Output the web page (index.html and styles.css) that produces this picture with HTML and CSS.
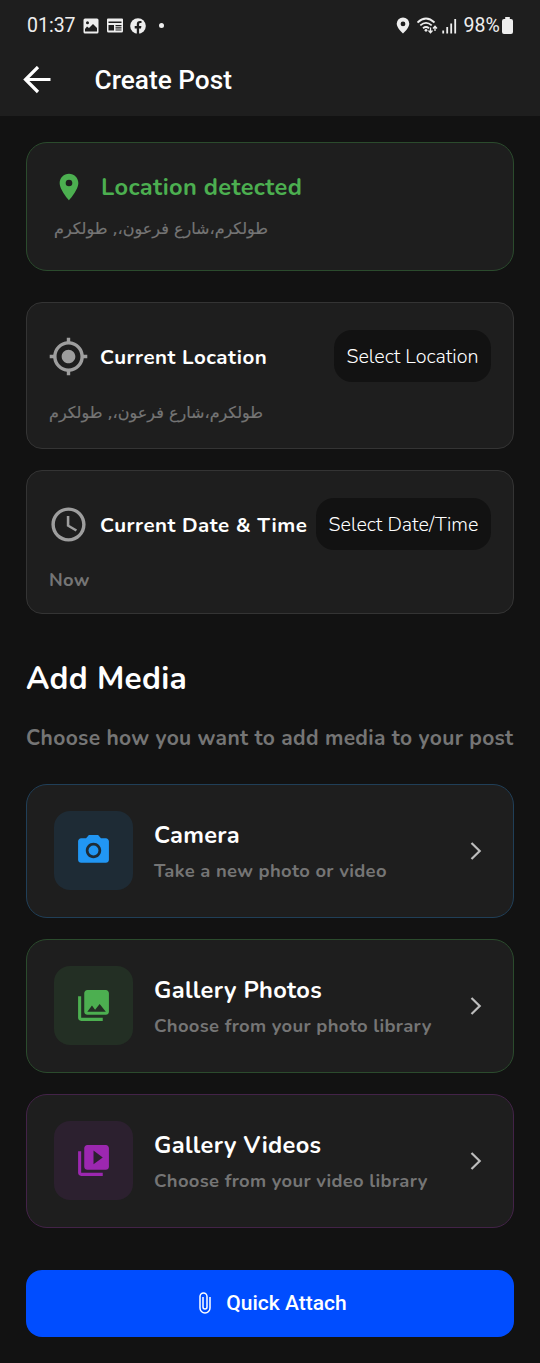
FILE: index.html
```html
<!DOCTYPE html>
<html lang="en">
<head>
<meta charset="utf-8">
<title>Create Post</title>
<link rel="stylesheet" href="styles.css">
</head>
<body>
<header class="top">
  <div class="status">
    <span class="clock">01:37</span>
    <svg class="s-photo" width="16" height="16" viewBox="0 0 16 16"><path fill="#eee" fill-rule="evenodd" d="M2 .5h12A1.5 1.5 0 0 1 15.500 2v12a1.500 1.500 0 0 1-1.500 1.500H2A1.500 1.500 0 0 1 .5 14V2A1.500 1.500 0 0 1 2 .5zM2 11v2.500h12V10l-4-4-4 4-2-1.500zM4.500 3.200a1.500 1.500 0 1 0 0 3 1.500 1.500 0 0 0 0-3z"/></svg>
    <svg class="s-news" width="16" height="15" viewBox="0 0 16 15"><path fill="#eee" fill-rule="evenodd" d="M1 .5h14a1 1 0 0 1 1 1V13a1.500 1.500 0 0 1-1.500 1.500h-13A1.500 1.500 0 0 1 0 13V1.500a1 1 0 0 1 1-1zM1.500 3.500V5h13V3.500zM1.500 7v5.500H7V7zM8.500 7v1.200h6V7zm0 2.300v1.100h6V9.300zm0 2.200v1h6v-1z"/></svg>
    <svg class="s-fb" width="16" height="16" viewBox="0 0 16 16"><circle cx="8" cy="8" r="7.800" fill="#eee"/><path fill="#1e1e1e" d="M6.800 16v-5.500H4.700V8h2.100V6.300c0-2.200 1.200-3.300 3.200-3.300.8 0 1.500.1 1.500.1v2h-1c-1.100 0-1.400.6-1.400 1.300V8h2.300l-.4 2.500H9.100V16z"/></svg>
    <i class="dot"></i>
    <span class="grow"></span>
    <svg width="14" height="17" viewBox="0 0 14 17"><path fill="#eee" fill-rule="evenodd" d="M7 .5A6.300 6.300 0 0 0 .7 6.800C.7 11 7 16.500 7 16.500s6.300-5.500 6.300-9.700A6.300 6.300 0 0 0 7 .5zm0 4a2.400 2.400 0 1 1 0 4.800 2.400 2.400 0 0 1 0-4.800z"/></svg>
    <svg class="s-wifi" width="22" height="17" viewBox="0 0 22 17"><g fill="none" stroke="#eee" stroke-width="1.800"><path d="M.5 5.500Q9-2.500 17.500 5.500M3.300 8.400q5.700-5 11.400 0M6 11.200q3-2.500 6 0"/></g><circle cx="9" cy="13.300" r="1.400" fill="#eee"/><path fill="none" stroke="#eee" stroke-width="1.300" d="M13.500 10.500v5m-2-2 2 2.200 2-2.200M18 14v-4.500m-2 2 2-2.200 2 2.200"/></svg>
    <svg class="s-signal" width="15" height="16" viewBox="0 0 15 16"><path stroke="#eee" stroke-width="1.800" d="M1.200 15.500v-3M5.200 15.500V9M9.200 15.500V5.500M13.200 15.500V1"/></svg>
    <span class="battery-text">98%</span>
    <svg class="s-bat" width="11" height="17" viewBox="0 0 11 17"><path fill="#eee" d="M3.200 0h4.600v2h1.200a2 2 0 0 1 2 2v11a2 2 0 0 1-2 2H2a2 2 0 0 1-2-2V4a2 2 0 0 1 2-2h1.200z"/></svg>
  </div>
  <div class="bar">
    <svg width="28" height="28" viewBox="0 0 28 28"><path fill="none" stroke="#fff" stroke-width="3.200" d="M27.500 13.500H2.500M15 1 2.500 13.500 15 26"/></svg>
    <h1>Create Post</h1>
  </div>
</header>
<main>
  <section class="card detected">
    <div class="row">
      <svg width="32" height="32" viewBox="0 0 24 24"><path fill="#4caf50" d="M12 2C8.130 2 5 5.130 5 9c0 5.250 7 13 7 13s7-7.750 7-13c0-3.870-3.130-7-7-7zm0 9.500a2.500 2.500 0 0 1 0-5 2.500 2.500 0 0 1 0 5z"/></svg>
      <h2>Location detected</h2>
    </div>
    <p class="arabic" lang="ar"><bdo dir="rtl">طولكرم،شارع فرعون،, طولكرم</bdo></p>
  </section>

  <section class="card setting">
    <div class="row">
      <svg width="41" height="41" viewBox="0 0 24 24"><path fill="#9e9e9e" d="M12 8c-2.210 0-4 1.790-4 4s1.790 4 4 4 4-1.790 4-4-1.790-4-4-4zm8.940 3A8.994 8.994 0 0 0 13 3.060V1h-2v2.060A8.994 8.994 0 0 0 3.060 11H1v2h2.060A8.994 8.994 0 0 0 11 20.940V23h2v-2.060A8.994 8.994 0 0 0 20.940 13H23v-2h-2.060zM12 19c-3.870 0-7-3.130-7-7s3.130-7 7-7 7 3.130 7 7-3.130 7-7 7z"/></svg>
      <h3>Current Location</h3>
      <button class="pill p-loc">Select Location</button>
    </div>
    <p class="arabic" lang="ar"><bdo dir="rtl">طولكرم،شارع فرعون،, طولكرم</bdo></p>
  </section>

  <section class="card setting time">
    <div class="row">
      <svg width="41" height="41" viewBox="0 0 24 24"><path fill="#9e9e9e" d="M11.990 2C6.470 2 2 6.480 2 12s4.470 10 9.990 10C17.520 22 22 17.520 22 12S17.520 2 11.990 2zM12 20c-4.420 0-8-3.580-8-8s3.580-8 8-8 8 3.580 8 8-3.580 8-8 8zm.5-13H11v6l5.250 3.150.75-1.230-4.500-2.670z"/></svg>
      <h3>Current Date &amp; Time</h3>
      <button class="pill p-date">Select Date/Time</button>
    </div>
    <p class="now">Now</p>
  </section>

  <h2 class="media-title">Add Media</h2>
  <p class="media-sub">Choose how you want to add media to your post</p>

  <div class="options">
    <section class="card option blue">
      <div class="tile"><svg width="37" height="37" viewBox="0 0 24 24"><circle cx="12" cy="12" r="3.200"/><path d="M9 2 7.170 4H4c-1.100 0-2 .9-2 2v12c0 1.100.9 2 2 2h16c1.100 0 2-.9 2-2V6c0-1.100-.9-2-2-2h-3.170L15 2H9zm3 15c-2.760 0-5-2.240-5-5s2.240-5 5-5 5 2.240 5 5-2.240 5-5 5z"/></svg></div>
      <div class="text"><h3>Camera</h3><p>Take a new photo or video</p></div>
      <svg class="chev" width="12" height="18" viewBox="0 0 12 18"><path d="M1.500 1 9.700 9 1.500 17"/></svg>
    </section>
    <section class="card option green">
      <div class="tile"><svg width="37" height="37" viewBox="0 0 24 24"><path d="M22 16V4c0-1.100-.9-2-2-2H8c-1.100 0-2 .9-2 2v12c0 1.100.9 2 2 2h12c1.100 0 2-.9 2-2zm-11-4 2.030 2.710L16 11l4 5H8l3-4zM2 6v14c0 1.100.9 2 2 2h14v-2H4V6H2z"/></svg></div>
      <div class="text"><h3>Gallery Photos</h3><p>Choose from your photo library</p></div>
      <svg class="chev" width="12" height="18" viewBox="0 0 12 18"><path d="M1.500 1 9.700 9 1.500 17"/></svg>
    </section>
    <section class="card option purple">
      <div class="tile"><svg width="37" height="37" viewBox="0 0 24 24"><path d="M4 6H2v14c0 1.100.9 2 2 2h14v-2H4V6zm16-4H8c-1.100 0-2 .9-2 2v12c0 1.100.9 2 2 2h12c1.100 0 2-.9 2-2V4c0-1.100-.9-2-2-2zm-8 12.500v-9l6 4.500-6 4.500z"/></svg></div>
      <div class="text"><h3>Gallery Videos</h3><p>Choose from your video library</p></div>
      <svg class="chev" width="12" height="18" viewBox="0 0 12 18"><path d="M1.500 1 9.700 9 1.500 17"/></svg>
    </section>
  </div>

  <button class="attach">
    <svg width="12" height="22" viewBox="0 0 12 22"><path fill="none" stroke="#fff" stroke-width="1.500" d="M11 5v11a5 5 0 0 1-10 0V4.500a3.500 3.500 0 0 1 7 0V15a2 2 0 0 1-4 0V5"/></svg>
    <span>Quick Attach</span>
  </button>
</main>
</body>
</html>
```
FILE: styles.css
```css
* { box-sizing: border-box; margin: 0; padding: 0; }
body { width: 540px; height: 1363px; background: #121212; color: #fff; font-family: Nunito, "Open Sans", "Noto Sans", sans-serif; overflow: hidden; }
svg { display: block; flex: none; }
button { border: 0; color: inherit; font-family: inherit; }
h1, h2, h3, p, span, button { white-space: nowrap; }
main h2, main h3, .media-sub, .now, .text p { font-weight: 700; letter-spacing: .33px; }

.top { height: 116px; background: #1e1e1e; font-family: Roboto, sans-serif; }
.status { display: flex; align-items: center; height: 51px; padding: 0 27px; color: #eee; font-size: 19.500px; }
.clock { width: 49px; }
.s-photo { margin-left: 7px; }
.s-news { margin-left: 8px; }
.s-fb { margin-left: 7px; }
.dot { width: 5px; height: 5px; margin-left: 13px; border-radius: 50%; background: #eee; }
.grow { flex: 1; }
.s-wifi { margin-left: 7px; }
.s-signal { margin-left: 3px; }
.battery-text { width: 37px; margin-left: 7px; }
.s-bat { margin: 0 0 0 1.500px; }
.bar { display: flex; align-items: center; height: 57px; padding-left: 23px; gap: 43.500px; }
.bar h1 { font-size: 26.250px; font-weight: 500; }

main { padding: 26px 26px 0; }
.card { border: 1px solid #343434; background: #1e1e1e; border-radius: 16px; }
.row { display: flex; align-items: center; }

.detected { height: 128.500px; padding: 28px 26px 0; border-color: #2b4b2d; border-radius: 21px; }
.detected h2 { margin-left: 16px; color: #4caf50; font-size: 23.600px; line-height: 32px; }
.arabic { color: #757575; font-size: 16px; line-height: 26px; font-family: "DejaVu Sans", sans-serif; -webkit-text-stroke: .2px #757575; }
.detected .arabic { margin: 13px 0 0 1px; }

.setting { height: 147px; margin-top: 31.500px; padding: 27px 22px 0 21px; }
.setting .row { height: 52px; }
.setting h3 { flex: 1; margin-left: 11px; padding-top: 1px; font-size: 20.500px; letter-spacing: .5px; }
.setting .arabic { margin: 18px 0 0 1px; }
.pill { height: 52px; border-radius: 18px; background: #121212; font-size: 19.700px; font-weight: 300; }
.p-loc { width: 157px; }
.p-date { width: 175px; }
.time { height: 144px; margin-top: 21px; }
.now { margin: 17px 0 0 1px; color: #757575; font-size: 18.400px; line-height: 26px; }

.media-title { margin-top: 43px; font-size: 31.500px; line-height: 44px; }
.media-sub { margin-top: 22px; color: #757575; font-size: 21px; line-height: 30px; }
.options { display: grid; gap: 21.500px; margin-top: 31px; }
.option { display: flex; align-items: center; height: 133.500px; padding: 0 31px 0 27px; border-radius: 21px; }
.tile { display: grid; place-items: center; width: 79px; height: 79px; border-radius: 16px; }
.text { flex: 1; margin-left: 21px; }
.text h3 { font-size: 23.600px; line-height: 34px; }
.text p { margin-top: 6px; color: #757575; font-size: 18.400px; line-height: 26px; }
.chev path { fill: none; stroke: #bdbdbd; stroke-width: 2.200; }
.blue { border-color: #203f58; }
.blue .tile { background: #1e2b35; }
.blue .tile svg { fill: #2196f3; }
.green { border-color: #2b4b2d; }
.green .tile { background: #232f24; }
.green .tile svg { fill: #4caf50; }
.purple { border-color: #432348; }
.purple .tile { background: #2c202f; }
.purple .tile svg { fill: #9c27b0; }

.attach { display: flex; align-items: center; justify-content: center; gap: 15px; width: 488px; height: 67px; margin-top: 42px; padding: 0 0 1px 6px; border-radius: 16px; background: #004dff; font: 500 21px Roboto, sans-serif; }
```
